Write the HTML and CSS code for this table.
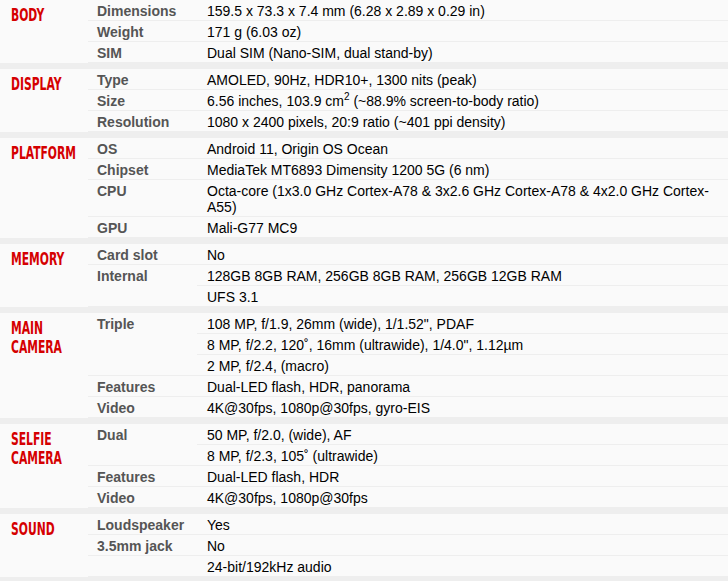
FILE: index.html
```html
<!DOCTYPE html>
<html>
<head>
<meta charset="utf-8">
<link rel="stylesheet" href="styles.css">
</head>
<body>
<div class="specs">
  <table class="sec">
    <tr><th rowspan="3" class="cat"><span>BODY</span></th><td class="ttl">Dimensions</td><td class="nfo">159.5 x 73.3 x 7.4 mm (6.28 x 2.89 x 0.29 in)</td></tr>
    <tr><td class="ttl">Weight</td><td class="nfo">171 g (6.03 oz)</td></tr>
    <tr><td class="ttl">SIM</td><td class="nfo">Dual SIM (Nano-SIM, dual stand-by)</td></tr>
  </table>
  <table class="sec">
    <tr><th rowspan="3" class="cat"><span>DISPLAY</span></th><td class="ttl">Type</td><td class="nfo">AMOLED, 90Hz, HDR10+, 1300 nits (peak)</td></tr>
    <tr><td class="ttl">Size</td><td class="nfo">6.56 inches, 103.9 cm<sup>2</sup> (~88.9% screen-to-body ratio)</td></tr>
    <tr><td class="ttl">Resolution</td><td class="nfo">1080 x 2400 pixels, 20:9 ratio (~401 ppi density)</td></tr>
  </table>
  <table class="sec">
    <tr><th rowspan="4" class="cat"><span>PLATFORM</span></th><td class="ttl">OS</td><td class="nfo">Android 11, Origin OS Ocean</td></tr>
    <tr><td class="ttl">Chipset</td><td class="nfo">MediaTek MT6893 Dimensity 1200 5G (6 nm)</td></tr>
    <tr><td class="ttl">CPU</td><td class="nfo">Octa-core (1x3.0 GHz Cortex-A78 &amp; 3x2.6 GHz Cortex-A78 &amp; 4x2.0 GHz Cortex-A55)</td></tr>
    <tr><td class="ttl">GPU</td><td class="nfo">Mali-G77 MC9</td></tr>
  </table>
  <table class="sec">
    <tr><th rowspan="3" class="cat"><span>MEMORY</span></th><td class="ttl">Card slot</td><td class="nfo">No</td></tr>
    <tr><td class="ttl" rowspan="2">Internal</td><td class="nfo">128GB 8GB RAM, 256GB 8GB RAM, 256GB 12GB RAM</td></tr>
    <tr><td class="nfo">UFS 3.1</td></tr>
  </table>
  <table class="sec">
    <tr><th rowspan="5" class="cat"><span>MAIN<br>CAMERA</span></th><td class="ttl" rowspan="3">Triple</td><td class="nfo">108 MP, f/1.9, 26mm (wide), 1/1.52", PDAF</td></tr>
    <tr><td class="nfo">8 MP, f/2.2, 120˚, 16mm (ultrawide), 1/4.0", 1.12µm</td></tr>
    <tr><td class="nfo">2 MP, f/2.4, (macro)</td></tr>
    <tr><td class="ttl">Features</td><td class="nfo">Dual-LED flash, HDR, panorama</td></tr>
    <tr><td class="ttl">Video</td><td class="nfo">4K@30fps, 1080p@30fps, gyro-EIS</td></tr>
  </table>
  <table class="sec">
    <tr><th rowspan="4" class="cat"><span>SELFIE<br>CAMERA</span></th><td class="ttl" rowspan="2">Dual</td><td class="nfo">50 MP, f/2.0, (wide), AF</td></tr>
    <tr><td class="nfo">8 MP, f/2.3, 105˚ (ultrawide)</td></tr>
    <tr><td class="ttl">Features</td><td class="nfo">Dual-LED flash, HDR</td></tr>
    <tr><td class="ttl">Video</td><td class="nfo">4K@30fps, 1080p@30fps</td></tr>
  </table>
  <table class="sec">
    <tr><th rowspan="3" class="cat"><span>SOUND</span></th><td class="ttl">Loudspeaker</td><td class="nfo">Yes</td></tr>
    <tr><td class="ttl">3.5mm jack</td><td class="nfo">No</td></tr>
    <tr><td class="ttl"></td><td class="nfo">24-bit/192kHz audio</td></tr>
  </table>
</div>
</body>
</html>
```
FILE: styles.css
```css
html, body {
  margin: 0;
  padding: 0;
  background: #eeeeee;
}
.specs {
  width: 728px;
  font-family: "Liberation Sans", Arial, sans-serif;
  font-size: 14px;
}
.sec {
  width: 100%;
  border-collapse: collapse;
  border-spacing: 0;
  background: #fafafa;
  margin-bottom: 6px;
  table-layout: fixed;
}
.sec th.cat {
  width: 88px;
  padding: 5px 0 0 11px;
  box-sizing: border-box;
  text-align: left;
  vertical-align: top;
  font-weight: normal;
}
.sec th.cat span {
  display: inline-block;
  font-family: "DejaVu Sans Condensed", "DejaVu Sans", sans-serif;
  font-stretch: condensed;
  font-weight: bold;
  font-size: 18px;
  line-height: 19px;
  color: #d50000;
  transform: scaleX(0.665);
  transform-origin: 0 0;
  white-space: nowrap;
}
.sec td {
  border-bottom: 1px solid #eeeeee;
  line-height: 16px;
  padding: 3px 10px 1px 9px;
  vertical-align: top;
}
.sec td.ttl {
  width: 90px;
  font-weight: bold;
  color: #555555;
}
.sec td.nfo {
  padding-left: 10px;
  color: #000000;
}
.sec sup {
  font-size: 10px;
  line-height: 0;
  vertical-align: 6px;
}
```
